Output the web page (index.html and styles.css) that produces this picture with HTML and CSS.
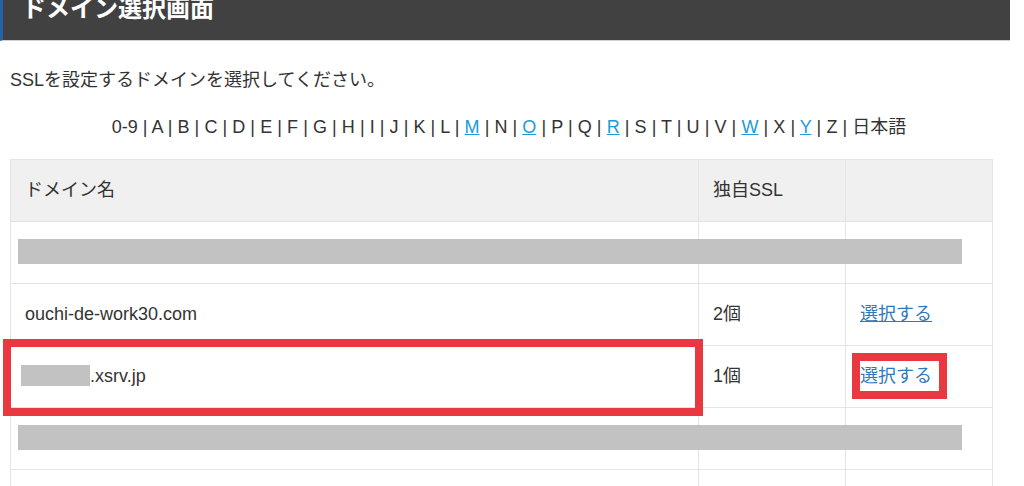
FILE: index.html
```html
<!DOCTYPE html>
<html lang="ja">
<head>
    <meta charset="UTF-8">
    <title>ドメイン選択画面</title>
    <link rel="stylesheet" href="styles.css">
</head>
<body>
    <div class="page">
        <div class="page-head">
            <h1>ドメイン選択画面</h1>
        </div>

        <div class="content">
            <p class="lead">SSLを設定するドメインを選択してください。</p>

            <!-- 頭文字で絞り込み -->
            <p class="index-nav">
                0-9 | A | B | C | D | E | F | G | H | I | J | K | L | <a href="#">M</a> | N | <a href="#">O</a> | P | Q | <a href="#">R</a> | S | T | U | V | <a href="#">W</a> | X | <a href="#">Y</a> | Z | 日本語
            </p>

            <!-- ドメイン一覧 -->
            <table class="domain-table">
                <thead>
                    <tr>
                        <th class="col-name">ドメイン名</th>
                        <th class="col-ssl">独自SSL</th>
                        <th class="col-act"></th>
                    </tr>
                </thead>
                <tbody>
                    <tr>
                        <td class="masked"><span class="mask-bar"></span>&nbsp;</td>
                        <td>&nbsp;</td>
                        <td>&nbsp;</td>
                    </tr>
                    <tr>
                        <td>ouchi-de-work30.com</td>
                        <td>2個</td>
                        <td><a href="#" class="select-link">選択する</a></td>
                    </tr>
                    <tr>
                        <td class="marked"><span class="mask-inline"></span>.xsrv.jp<span class="mark mark-name"></span></td>
                        <td>1個</td>
                        <td class="marked"><a href="#" class="select-link plain">選択する</a><span class="mark mark-link"></span></td>
                    </tr>
                    <tr>
                        <td class="masked"><span class="mask-bar"></span>&nbsp;</td>
                        <td>&nbsp;</td>
                        <td>&nbsp;</td>
                    </tr>
                    <tr>
                        <td class="masked"><span class="mask-bar"></span>&nbsp;</td>
                        <td>&nbsp;</td>
                        <td>&nbsp;</td>
                    </tr>
                </tbody>
            </table>
        </div>
    </div>
</body>
</html>
```

FILE: styles.css
```css
/* 基本 */
* {
    margin: 0;
    padding: 0;
    box-sizing: border-box;
}

body {
    background: #fff;
    color: #333;
    font-family: "Liberation Sans", "Noto Sans CJK JP", sans-serif;
    font-size: 18px;
    line-height: 27px;
    overflow: hidden;
}

.page {
    width: 1010px;
}

/* 見出し帯 */
.page-head {
    height: 41px;
    background: #414141;
    border-left: 3px solid #2462aa;
    border-bottom: 1px solid #d2d2d2;
    padding-left: 19px;
    overflow: hidden;
}

.page-head h1 {
    color: #fff;
    font-size: 24px;
    font-weight: bold;
    line-height: 24px;
    margin-top: -3px;
}

.content {
    padding: 0 2px 0 10px;
}

.lead {
    margin-top: 26px;
}

/* 頭文字ナビ */
.index-nav {
    text-align: center;
    margin-top: 20px;
    word-spacing: 0.1px;
}

.index-nav a {
    color: #1d9bd7;
    text-decoration: underline;
}

/* ドメイン一覧 */
.domain-table {
    width: 983px;
    margin-top: 18px;
    border-collapse: collapse;
    border: 1px solid #e4e4e4;
}

.domain-table th,
.domain-table td {
    border: 1px solid #e4e4e4;
    padding: 17px 14px;
    text-align: left;
    font-weight: normal;
    vertical-align: middle;
}

.domain-table th {
    background: #f0f0f0;
}

.col-name {
    width: 688px;
}

.col-ssl {
    width: 147px;
}

.select-link {
    color: #2f79ba;
    text-decoration: underline;
}

.select-link.plain {
    text-decoration: none;
}

/* 伏せ字 */
.masked,
.marked {
    position: relative;
}

.mask-bar {
    position: absolute;
    left: 7px;
    top: 17px;
    width: 944px;
    height: 25px;
    background: #c2c2c2;
}

.mask-inline {
    display: inline-block;
    width: 69px;
    height: 21px;
    margin-left: -4px;
    vertical-align: -4px;
    background: #c2c2c2;
}

/* 赤枠 */
.mark {
    position: absolute;
    border: 8px solid #ea3840;
}

.mark-name {
    left: -8px;
    top: -7px;
    width: 700px;
    height: 77px;
}

.mark-link {
    left: 6px;
    top: 7px;
    width: 95px;
    height: 46px;
}
```
